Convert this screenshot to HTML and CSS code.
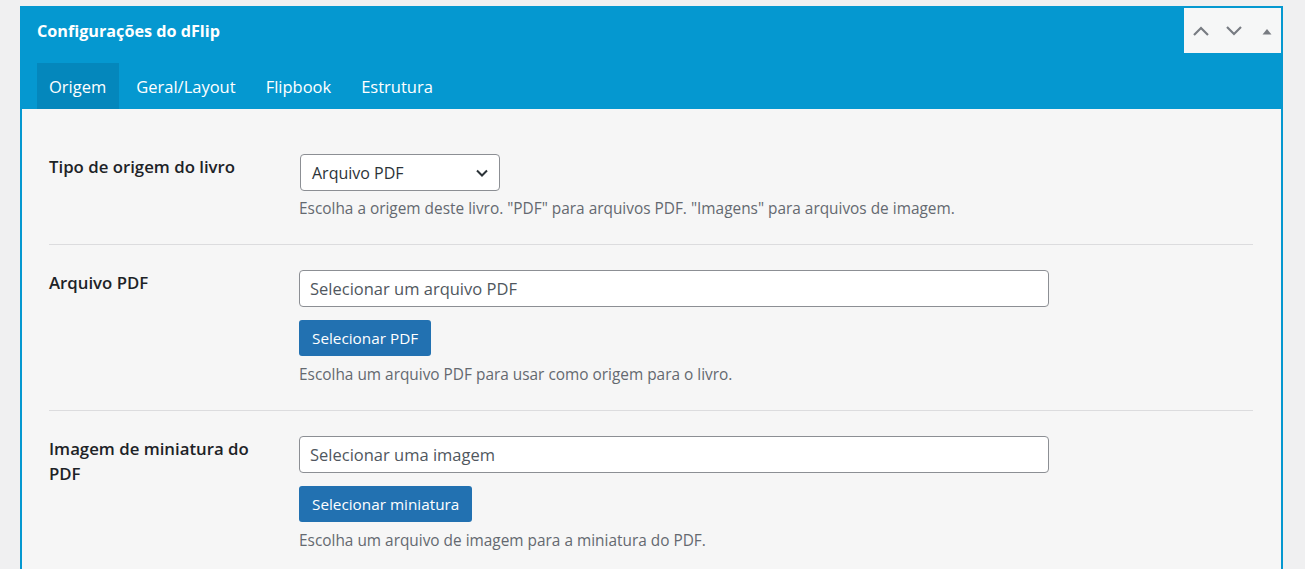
FILE: index.html
```html
<!DOCTYPE html>
<html lang="pt-BR">
<head>
<meta charset="utf-8">
<title>Configurações do dFlip</title>
<link rel="stylesheet" href="styles.css">
</head>
<body>
<div class="postbox">
  <div class="header">
    <div class="title-row">
      <h2 class="title">Configurações do dFlip</h2>
      <div class="controls">
        <span class="ctrl">
          <svg width="18" height="12" viewBox="0 0 18 12"><path d="M2 10 L9 3 L16 10" fill="none" stroke="#787c82" stroke-width="2.2"/></svg>
        </span>
        <span class="ctrl">
          <svg width="18" height="12" viewBox="0 0 18 12"><path d="M2 2 L9 9 L16 2" fill="none" stroke="#787c82" stroke-width="2.2"/></svg>
        </span>
        <span class="ctrl">
          <svg width="12" height="10" viewBox="0 0 12 10"><path d="M1.5 8.5 L6 3 L10.5 8.5 Z" fill="#787c82"/></svg>
        </span>
      </div>
    </div>
    <nav class="tabs">
      <span class="tab active">Origem</span>
      <span class="tab">Geral/Layout</span>
      <span class="tab">Flipbook</span>
      <span class="tab">Estrutura</span>
    </nav>
  </div>
  <div class="content">
    <div class="row">
      <div class="label">Tipo de origem do livro</div>
      <div class="field">
        <div class="select">
          <span>Arquivo PDF</span>
          <svg width="14" height="10" viewBox="0 0 14 10"><path d="M2 2.5 L7 7.5 L12 2.5" fill="none" stroke="#2c3338" stroke-width="2"/></svg>
        </div>
        <p class="desc">Escolha a origem deste livro. "PDF" para arquivos PDF. "Imagens" para arquivos de imagem.</p>
      </div>
    </div>
    <div class="row">
      <div class="label">Arquivo PDF</div>
      <div class="field">
        <div class="input">Selecionar um arquivo PDF</div>
        <button class="btn">Selecionar PDF</button>
        <p class="desc">Escolha um arquivo PDF para usar como origem para o livro.</p>
      </div>
    </div>
    <div class="row">
      <div class="label">Imagem de miniatura do PDF</div>
      <div class="field">
        <div class="input">Selecionar uma imagem</div>
        <button class="btn">Selecionar miniatura</button>
        <p class="desc">Escolha um arquivo de imagem para a miniatura do PDF.</p>
      </div>
    </div>
  </div>
</div>
</body>
</html>
```

FILE: styles.css
```css
html, body {
  margin: 0;
  padding: 0;
}
body {
  background: #f0f0f1;
  font-family: "Open Sans", "Noto Sans", sans-serif;
  color: #1d2327;
  padding: 6px 22px 0 20px;
  height: 563px;
  overflow: hidden;
}
.postbox {
  border: 2px solid #0598d0;
  border-bottom: none;
  background: #f6f6f6;
  min-height: 600px;
}
.header {
  background: #0598d0;
}
.title-row {
  display: flex;
  justify-content: space-between;
  align-items: flex-start;
  height: 55px;
}
.title {
  margin: 0;
  padding: 12px 0 0 15px;
  font-size: 16.2px;
  line-height: 22px;
  font-weight: 700;
  color: #fff;
}
.controls {
  width: 97px;
  height: 45px;
  background: #f6f7f7;
  display: flex;
  align-items: center;
  justify-content: center;
  gap: 15px;
  padding-left: 2px;
  box-sizing: border-box;
}
.ctrl {
  display: flex;
  align-items: center;
  justify-content: center;
  width: 18px;
  height: 18px;
}
.tabs {
  display: flex;
  height: 46px;
  padding-left: 15px;
  gap: 5px;
}
.tab {
  display: flex;
  align-items: center;
  padding: 0 13px 0 12px;
  color: #fff;
  font-size: 16.5px;
}
.tab.active {
  background: #0487bc;
}
.content {
  padding: 20px 28px 0 27px;
}
.row {
  display: flex;
  padding: 25px 0;
  border-bottom: 1px solid #dcdcde;
}
.label {
  width: 215px;
  margin-right: 35px;
  font-size: 16.8px;
  font-weight: 600;
  line-height: 25px;
  color: #1d2327;
  flex-shrink: 0;
}
.field {
  display: flex;
  flex-direction: column;
  align-items: flex-start;
}
.select {
  margin-left: 1px;
  width: 200px;
  height: 37px;
  box-sizing: border-box;
  border: 1px solid #8c8f94;
  border-radius: 4px;
  background: #fff;
  display: flex;
  align-items: center;
  justify-content: space-between;
  padding: 0 10px 0 11px;
  font-size: 16px;
  color: #2c3338;
}
.input {
  width: 750px;
  height: 37px;
  box-sizing: border-box;
  border: 1px solid #8c8f94;
  border-radius: 4px;
  background: #fff;
  display: flex;
  align-items: center;
  padding: 0 10px;
  font-size: 16.5px;
  color: #50575e;
}
.btn {
  margin-top: 13px;
  height: 36px;
  padding: 0 13px;
  background: #2271b1;
  border: none;
  border-radius: 3px;
  color: #fff;
  font-family: inherit;
  font-size: 15.3px;
}
.desc {
  margin: 8px 0 0;
  font-size: 15.4px;
  line-height: 20px;
  color: #646970;
}
.btn + .desc {
  margin-top: 9px;
}
```
